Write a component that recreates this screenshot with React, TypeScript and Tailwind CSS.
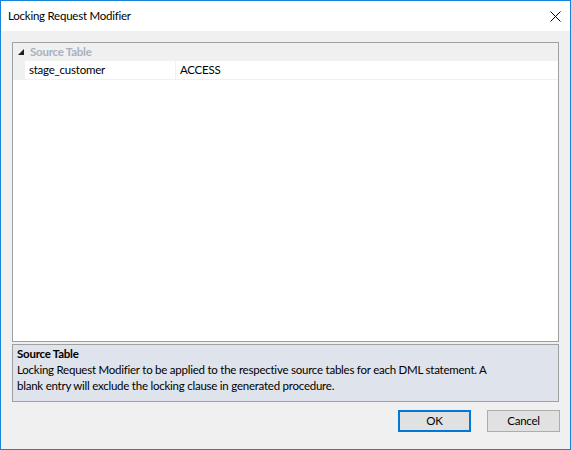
import React from "react";

const font = { fontFamily: '"Segoe UI", Lato, "Noto Sans", sans-serif' };

export default function App() {
  return (
    <div
      className="w-[571px] h-[450px] flex flex-col border border-[#1883d7] bg-[#f0f0f0] text-[11.5px] tracking-[-0.24px] text-black"
      style={font}
    >
      {/* Title bar */}
      <div className="h-[30px] bg-white flex items-center justify-between pl-[7px] pr-[9px]">
        <span>Locking Request Modifier</span>
        <svg width="11" height="11" viewBox="0 0 11 11" className="mt-[1px]">
          <path d="M0.5 0.5 L10.5 10.5 M10.5 0.5 L0.5 10.5" stroke="#000" strokeWidth="1" />
        </svg>
      </div>

      {/* Body */}
      <div className="flex-1 flex flex-col px-[11px] pt-[11px]">
        {/* Property grid */}
        <div className="h-[300px] border border-[#a0a0a0] bg-white flex flex-col">
          <div className="h-[18px] bg-[#f0f0f0] flex items-center">
            <div className="w-[13px] flex justify-center">
              <svg width="6" height="6" viewBox="0 0 6 6" className="ml-[3px]">
                <path d="M6 0 L6 6 L0 6 Z" fill="#1e1e1e" />
              </svg>
            </div>
            <span className="font-bold text-[#a9b1be] ml-[4px]">Source Table</span>
          </div>
          <div className="h-[19px] flex bg-[#f0f0f0]">
            <div className="w-[12px]" />
            <div className="w-[151px] bg-white border-b border-[#f0f0f0] border-r flex items-center pl-[4px]">
              stage_customer
            </div>
            <div className="flex-1 bg-white border-b border-[#f0f0f0] flex items-center pl-[4px]">
              ACCESS
            </div>
          </div>
        </div>

        {/* Help panel */}
        <div className="mt-[2px] h-[58px] border border-[#a0a0a0] bg-[#dfe3eb] px-[4px] pt-[1px] leading-[16px]">
          <div className="font-bold">Source Table</div>
          <div>
            Locking Request Modifier to be applied to the respective source tables for each DML statement. A
            <br />
            blank entry will exclude the locking clause in generated procedure.
          </div>
        </div>

        {/* Buttons */}
        <div className="mt-[8px] flex justify-end gap-[16px]">
          <button className="w-[73px] h-[22px] border-2 border-[#0078d7] bg-[#e1e1e1] translate-x-[1px]">OK</button>
          <button className="w-[73px] h-[22px] border border-[#adadad] bg-[#e1e1e1] translate-x-[1px]">Cancel</button>
        </div>
      </div>
    </div>
  );
}
